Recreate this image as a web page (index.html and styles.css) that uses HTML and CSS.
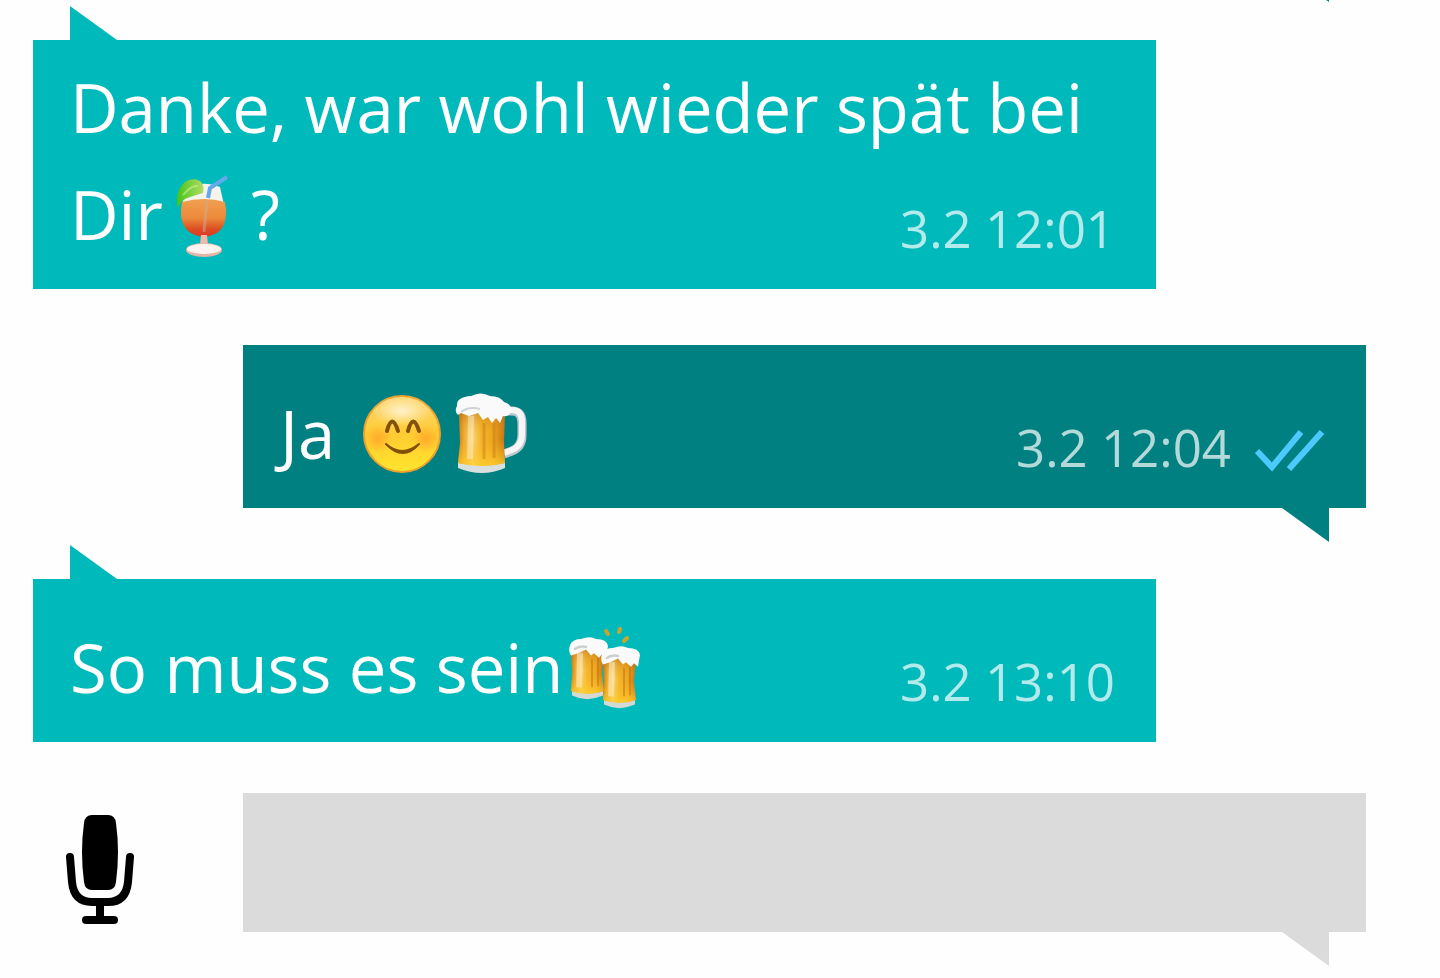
FILE: index.html
```html
<!DOCTYPE html>
<html lang="de">

<head>
    <meta charset="UTF-8">
    <meta name="viewport" content="width=device-width, initial-scale=1.0">
    <title>Chat</title>
    <link rel="stylesheet" href="styles.css">
</head>

<body>
    <main class="chat">
        <div class="message received">
            <p class="text">Danke, war wohl wieder spät bei Dir<svg class="emoji" viewBox="0 0 88 84" role="img" aria-label="Cocktail">
                    <defs>
                        <linearGradient id="drink" x1="0" y1="0" x2="0" y2="1">
                            <stop offset="0" stop-color="#f0a050" />
                            <stop offset="0.5" stop-color="#ec8a3a" />
                            <stop offset="0.8" stop-color="#dc4c22" />
                            <stop offset="1" stop-color="#d9372a" />
                        </linearGradient>
                        <linearGradient id="lime" x1="0" y1="0" x2="1" y2="0">
                            <stop offset="0" stop-color="#45c51c" />
                            <stop offset="1" stop-color="#b2dc62" />
                        </linearGradient>
                    </defs>
                    <path d="M23 14q18-8 34-1l4 18H19z" fill="#f6f3ec" />
                    <path d="M19 28q22-6 43 0q6 32-21 35Q13 60 19 28z" fill="url(#drink)" />
                    <path d="M15 34C10 14 25 0 37 7q5 4 3 12L27 23Q17 26 15 34z" fill="url(#lime)" />
                    <path d="M20 21q8-10 15-9" fill="none" stroke="#d4ec94" stroke-width="2" opacity="0.6" />
                    <path d="M44 26l-3 32" fill="none" stroke="#c9a9a0" stroke-width="3" opacity="0.5" />
                    <path d="M45 24l2-10L64 3" fill="none" stroke="#62aaea" stroke-width="4" stroke-linejoin="round" />
                    <path d="M38 61h6l1 10h-8z" fill="#f2b9a9" />
                    <ellipse cx="41" cy="76" rx="18" ry="7" fill="#e6b5a8" />
                    <ellipse cx="41" cy="75" rx="17" ry="5" fill="#fff4ef" />
                </svg>?</p>
            <div class="meta">
                <time class="time">3.2 12:01</time>
            </div>
        </div>

        <div class="message sent">
            <p class="text">Ja <svg class="emoji" viewBox="-6 0 88 84" role="img" aria-label="Lächeln">
                    <defs>
                        <linearGradient id="face" x1="0" y1="0" x2="0" y2="1">
                            <stop offset="0" stop-color="#fcd778" />
                            <stop offset="0.5" stop-color="#ffcb32" />
                            <stop offset="1" stop-color="#ffe52c" />
                        </linearGradient>
                        <radialGradient id="cheek">
                            <stop offset="0" stop-color="#ff9425" stop-opacity="0.6" />
                            <stop offset="1" stop-color="#ff9425" stop-opacity="0" />
                        </radialGradient>
                        <radialGradient id="glow">
                            <stop offset="0" stop-color="#fff6d8" stop-opacity="0.9" />
                            <stop offset="1" stop-color="#fff6d8" stop-opacity="0" />
                        </radialGradient>
                    </defs>
                    <circle cx="43" cy="41" r="38" fill="url(#face)" stroke="#eda32d" stroke-width="2" />
                    <ellipse cx="43" cy="18" rx="30" ry="15" fill="url(#glow)" />
                    <circle cx="19" cy="46" r="14" fill="url(#cheek)" />
                    <circle cx="67" cy="46" r="14" fill="url(#cheek)" />
                    <path d="M28 38q5-19 11 0M49 38q5-19 11 0" fill="none" stroke="#83500b" stroke-width="4" stroke-linecap="round" />
                    <path d="M27 51q16 14 33 0q-16 18-33 0z" fill="#83500b" stroke="#83500b" stroke-width="2" stroke-linejoin="round" />
                </svg><svg class="emoji" viewBox="-6 0 88 84" role="img" aria-label="Bier">
                    <defs>
                        <linearGradient id="beer" x1="0" y1="0" x2="1" y2="0">
                            <stop offset="0" stop-color="#c87513" />
                            <stop offset="0.12" stop-color="#eda82c" />
                            <stop offset="0.3" stop-color="#f9d67b" />
                            <stop offset="0.48" stop-color="#f5b62c" />
                            <stop offset="0.75" stop-color="#efa51f" />
                            <stop offset="1" stop-color="#c37213" />
                        </linearGradient>
                        <linearGradient id="shine" x1="0" y1="0" x2="0" y2="1">
                            <stop offset="0" stop-color="#a75b13" stop-opacity="0.45" />
                            <stop offset="0.5" stop-color="#f9b928" stop-opacity="0" />
                            <stop offset="1" stop-color="#ffd02e" stop-opacity="0.8" />
                        </linearGradient>
                    </defs>
                    <path d="M56 18h9q10 0 10 12v12q0 12-10 16l-8 3" fill="none" stroke="#bac9ce" stroke-width="9" />
                    <path d="M56 17h9q10 0 10 12v12q0 12-10 16l-8 3" fill="none" stroke="#f7f5f6" stroke-width="6" />
                    <path d="M11 69h47v6q-23 10-47 0z" fill="#d8dfdf" />
                    <path d="M12 18h46l-1 32 1 20q-23 6-47 0l2-20z" fill="url(#beer)" />
                    <path d="M12 18h46l-1 32 1 20q-23 6-47 0l2-20z" fill="url(#shine)" />
                    <path d="M24 23l-1 43" stroke="#fff1cc" stroke-width="6" opacity="0.45" />
                    <path d="M37 30v36M47 30v35" stroke="#c77a14" stroke-width="3" opacity="0.45" />
                    <path d="M10 13Q9 4 24 3q10-5 19 0 10 0 14 6 8 2 7 9-2 6-8 5l-3 7-4-5-4 5-4-6-5 3-5-7-9 3-8-3-3 2q-4-4-1-9z" fill="#fafafa" />
                    <path d="M14 19q8-6 19-3" fill="none" stroke="#cdd4d5" stroke-width="2" />
                </svg></p>
            <div class="meta">
                <time class="time">3.2 12:04</time>
                <svg class="ticks" viewBox="0 0 70 44" role="img" aria-label="Gelesen">
                    <path d="M2 22L17 38L46 3M34 40L67 3" />
                </svg>
            </div>
        </div>

        <div class="message received">
            <p class="text">So muss es sein<svg class="emoji" viewBox="0 0 88 84" role="img" aria-label="Prost">
                    <g id="mug" transform="translate(0 -1) scale(1 1.18)">
                        <path d="M9 54h31v5q-16 6-31 0z" fill="#d3d9d3" />
                        <path d="M8 20h33l-2 20 2 15q-17 5-33 0l1-15z" fill="url(#beer)" />
                        <path d="M8 20h33l-2 20 2 15q-17 5-33 0l1-15z" fill="url(#shine)" />
                        <path d="M17 23l-1 29" stroke="#fff1cc" stroke-width="6" opacity="0.5" />
                        <path d="M29 28v24M35 27v24" stroke="#b96b16" stroke-width="2" opacity="0.45" />
                        <path d="M7 16q3-5 11-5 9-3 15 0 11 0 12 6l-2 10-4-3-3 3-5-4-3 2-5-5-8 3-7 2q-3-4-1-9z" fill="#fafafa" />
                        <path d="M11 20q6-4 13-2" fill="none" stroke="#c8d1cf" stroke-width="2" />
                    </g>
                    <use href="#mug" x="32" y="9" />
                    <path d="M43 4l2 3M57 2l-1 3M64 11l-3 3" stroke="#c8a52b" stroke-width="4" stroke-linecap="round" />
                </svg></p>
            <div class="meta">
                <time class="time">3.2 13:10</time>
            </div>
        </div>

        <form class="composer">
            <button type="button" class="mic-button" aria-label="Sprachnachricht">
                <svg class="mic" viewBox="0 0 68 110">
                    <path d="M26 0h16q7 0 8 8 4 29 0 59-1 8-8 8H26q-7 0-8-8-4-30 0-59 1-8 8-8z" />
                    <path class="line" d="M4 42l2 25q2 20 20 20h16q18 0 20-20l2-25M34 87v18M20 105h28" />
                </svg>
            </button>
            <div class="field">
                <input type="text" class="text-input" aria-label="Nachricht">
            </div>
        </form>
    </main>
</body>

</html>
```
FILE: styles.css
```css
* {
    box-sizing: border-box;
}

body {
    margin: 0;
    background: #fefefe;
    font-family: 'Open Sans', 'Noto Sans', sans-serif;
    overflow: hidden;
}

.chat {
    position: relative;
    padding: 40px 74px 46px 33px;
}

/* tail of the message scrolled off above */
.chat::before {
    content: "";
    position: absolute;
    top: -31px;
    right: 111px;
    width: 47px;
    height: 33px;
    background: #008080;
    clip-path: polygon(0 0, 100% 0, 100% 100%);
}

/* text and time share one cell, the time sits on the last line */
.message {
    position: relative;
    display: grid;
    align-items: end;
    min-height: 163px;
    padding: 14px 41px 21px 37px;
    color: #fff;
}

.message::after,
.field::after {
    content: "";
    position: absolute;
    width: 47px;
    height: 34px;
}

.received {
    margin-right: 210px;
    background: #00b9bb;
}

.received::after {
    left: 37px;
    bottom: 100%;
    background: #00b9bb;
    clip-path: polygon(0 0, 100% 100%, 0 100%);
}

.sent {
    margin: 56px 0 71px 210px;
    background: #008080;
}

.sent::after,
.field::after {
    right: 37px;
    top: 100%;
    background: #008080;
    clip-path: polygon(0 0, 100% 0, 100% 100%);
}

.text,
.meta {
    grid-area: 1 / 1;
}

.text {
    margin: 0;
    font-size: 67px;
    line-height: 107px;
}

.emoji {
    width: 88px;
    height: 84px;
    vertical-align: -18px;
}

.meta {
    display: flex;
    align-items: flex-end;
    justify-self: end;
}

.time {
    font-size: 51px;
    line-height: 80px;
    white-space: nowrap;
    color: rgba(255, 255, 255, 0.7);
}

.ticks {
    width: 70px;
    height: 44px;
    margin: 0 0 14px 24px;
    fill: none;
    stroke: #4ccaff;
    stroke-width: 6;
}

.composer {
    display: flex;
    align-items: center;
    margin-top: 51px;
}

.mic-button {
    width: 210px;
    padding: 14px 0 0 33px;
    border: none;
    background: none;
    text-align: left;
    cursor: pointer;
}

.mic {
    display: block;
    width: 68px;
    height: 110px;
}

.mic .line {
    fill: none;
    stroke: #000;
    stroke-width: 8;
    stroke-linecap: round;
}

.field {
    position: relative;
    flex: 1;
}

.field::after {
    background: #dbdbdb;
}

.text-input {
    display: block;
    width: 100%;
    height: 139px;
    padding: 0 37px;
    border: none;
    border-radius: 0;
    background: #dbdbdb;
    font-family: inherit;
    font-size: 67px;
}

.text-input:focus {
    outline: none;
}
```
